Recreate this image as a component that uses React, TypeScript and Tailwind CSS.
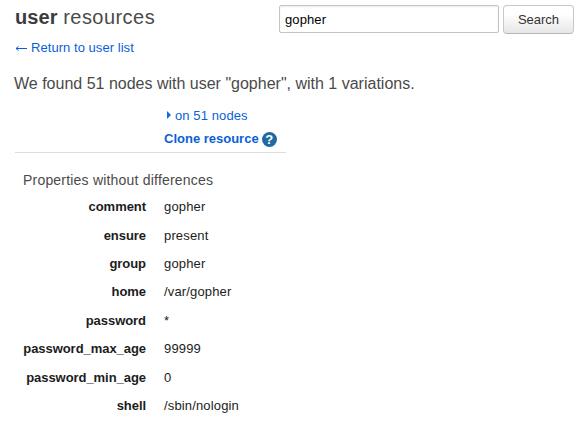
import React from "react";

const rows = [
  ["comment", "gopher"],
  ["ensure", "present"],
  ["group", "gopher"],
  ["home", "/var/gopher"],
  ["password", "*"],
  ["password_max_age", "99999"],
  ["password_min_age", "0"],
  ["shell", "/sbin/nologin"],
];

function BackArrow() {
  return (
    <svg className="shrink-0" width="13" height="8" viewBox="0 0 13 8" fill="none" stroke="currentColor" strokeWidth="1">
      <path d="M1 4.5H12M3.5 2.5L1 4.5L3.5 6.5" />
    </svg>
  );
}

function HelpIcon() {
  return (
    <span className="flex size-[15px] items-center justify-center rounded-full bg-[#216a9f] text-[13px] leading-none font-bold text-white">
      ?
    </span>
  );
}

export default function App() {
  return (
    <main className="h-[429px] w-[586px] overflow-hidden bg-white font-['Liberation_Sans',Arial,sans-serif] text-[13px] text-[#1c1c1c]">
      <header className="flex h-[74px] justify-between pr-[12px] pl-[15px] pt-[5px]">
        <div>
          <h1 className="text-[20px] leading-6 text-[#4a4a4a]">
            <b className="font-bold tracking-[0.1px] text-[#3c3c3c]">user</b>{" "}
            <span className="tracking-[0.45px]">resources</span>
          </h1>
          <a className="mt-[10px] flex h-[18px] items-center gap-[3px] leading-[18px] text-[#0a5fd8]">
            <BackArrow />
            <span className="tracking-[0.05px]">Return to user list</span>
          </a>
        </div>
        <form className="flex gap-[4px]">
          <input
            className="h-[28px] w-[220px] rounded-[2px] border border-[#c4c4c4] px-[5px] tracking-[0.1px] text-black shadow-[inset_0_1px_2px_rgba(0,0,0,0.08)]"
            defaultValue="gopher"
          />
          <button
            type="button"
            className="h-[29px] w-[71px] rounded-[4px] border border-[#c8c8c8] border-b-[#b8b8b8] bg-linear-to-b from-white from-30% to-[#e6e6e6] text-[#333]"
          >
            Search
          </button>
        </form>
      </header>
      <p className="pl-[14px] text-[16px] leading-5 text-[#4a4a4a]">We found 51 nodes with user "gopher", with 1 variations.</p>
      <section className="mt-[10px] ml-[15px] h-[49px] w-[271px] border-b border-[#ddd] pl-[149px] text-[#0a5fd8]">
        <div className="flex h-[23px] items-center gap-[4px] pl-[3px]">
          <span className="mb-[2px] h-0 w-0 border-y-[4px] border-l-[4px] border-y-transparent border-l-[#0a6fe0]" />
          <span className="tracking-[0.1px]">on 51 nodes</span>
        </div>
        <div className="flex h-[24px] items-center gap-[3px]">
          <b>Clone resource</b>
          <HelpIcon />
        </div>
      </section>
      <h2 className="mt-[17px] pl-[23px] text-[14px] leading-5 tracking-[0.2px] text-[#4a4a4a]">Properties without differences</h2>
      <dl className="mt-[3.3px]">
        {rows.map(([k, v]) => (
          <div key={k} className="flex h-[28.4px] gap-[18px] leading-[28px]">
            <dt className="w-[146px] text-right font-bold tracking-[-0.05px]">{k}</dt>
            <dd className="tracking-[0.15px]">{v}</dd>
          </div>
        ))}
      </dl>
    </main>
  );
}
